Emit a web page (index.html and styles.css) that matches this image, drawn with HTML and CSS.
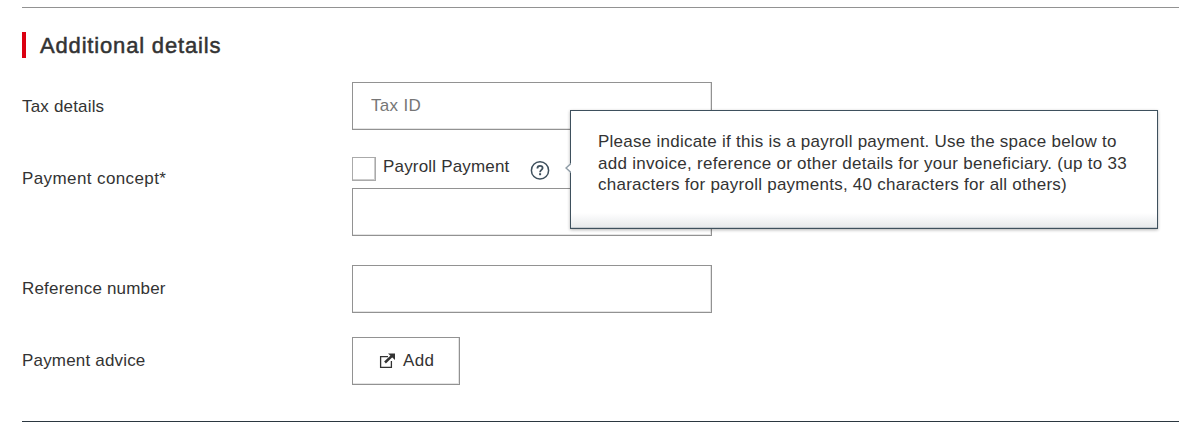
FILE: index.html
```html
<!DOCTYPE html>
<html lang="en">
<head>
	<meta charset="UTF-8">
	<title>Additional details</title>
	<link rel="stylesheet" href="styles.css">
</head>
<body>
	<form class="details">
		<h2 class="title">Additional details</h2>
		<div class="row">
			<label class="label taxLabel" for="taxId">Tax details</label>
			<input class="field" id="taxId" type="text" placeholder="Tax ID">
		</div>
		<div class="row concept">
			<label class="label conceptLabel" for="concept">Payment concept*</label>
			<div class="control">
				<div class="payroll">
					<input class="checkbox" id="payroll" type="checkbox">
					<label class="payrollLabel" for="payroll">Payroll Payment</label>
					<div class="help">
						<svg class="helpIcon" width="20" height="20" viewBox="0 0 20 20" fill="none" stroke="#3e505d">
							<circle cx="10" cy="10.4" r="8.6" stroke-width="1.5"/>
							<path d="M7.4 8.4C7.4 6.6 8.5 5.9 10 5.9C11.6 5.9 12.6 6.7 12.6 8.1C12.6 9.9 10.1 10 10.1 12.2" stroke-width="1.8"/>
							<path d="M10.1 13.2V15.2" stroke-width="2"/>
						</svg>
						<div class="tooltip">
							<svg class="arrow" width="6" height="12" viewBox="0 0 6 12">
								<path d="M6 1.5L1 6L6 10.5" fill="#fff" stroke="#8f9ca6" stroke-width="1.5"/>
							</svg>
							<p class="tooltipText">
								<span class="line">Please indicate if this is a payroll payment. Use the space below to</span>
								<span class="line wide">add invoice, reference or other details for your beneficiary. (up to 33</span>
								<span class="line">characters for payroll payments, 40 characters for all others)</span>
							</p>
						</div>
					</div>
				</div>
				<input class="field" id="concept" type="text">
			</div>
		</div>
		<div class="row">
			<label class="label" for="reference">Reference number</label>
			<input class="field" id="reference" type="text">
		</div>
		<div class="row">
			<span class="label">Payment advice</span>
			<button class="addButton" type="button">
				<svg width="16" height="16" viewBox="0 0 16 16">
					<path d="M9 3.6H1.6V14.4H12.4V8" fill="none" stroke="#333" stroke-width="1.3"/>
					<path d="M6 9.5L13 2.8" fill="none" stroke="#333" stroke-width="2.5"/>
					<path d="M9 0.5H16V7Z" fill="#333"/>
				</svg>
				<span>Add</span>
			</button>
		</div>
	</form>
</body>
</html>
```

FILE: styles.css
```css
* {
	box-sizing: border-box;
	margin: 0;
	padding: 0;
}

body {
	background-color: #fff;
	color: #333;
	font-family: "Liberation Sans", Arial, sans-serif;
	font-size: 17px;
	letter-spacing: 0.18px;
	overflow: hidden;
}

.details {
	margin: 7px 0 0 22px;
	padding-top: 24px;
	height: 415px;
	border-top: 1px solid #929292;
	border-bottom: 1px solid #2b3740;
	box-shadow: 0 1px 0 #c3c8cc;
}

.title {
	height: 26px;
	margin-bottom: 24px;
	padding-left: 14px;
	border-left: 4px solid #db0011;
	font-size: 22px;
	font-weight: 500;
	letter-spacing: 0.83px;
	line-height: 28px;
	-webkit-text-stroke: 0.5px #333;
}

.row {
	display: grid;
	grid-template-columns: 330px 360px;
	margin-bottom: 24px;
}

.label {
	height: 48px;
	line-height: 48px;
	white-space: nowrap;
}

.taxLabel {
	line-height: 50px;
}

.conceptLabel {
	line-height: 50px;
	letter-spacing: 0.4px;
}

.field {
	width: 360px;
	height: 48px;
	padding: 0 18px;
	border: 1px solid #929292;
	box-shadow: inset -1px -1px 0 #e4e4e4;
	background-color: #fff;
	font: inherit;
	letter-spacing: 0.3px;
}

.field::placeholder {
	color: #767676;
}

.concept {
	margin-bottom: 29px;
}

.control {
	padding-top: 3px;
}

.payroll {
	display: flex;
	height: 31px;
}

.checkbox {
	appearance: none;
	width: 24px;
	height: 24px;
	border: 1px solid #aaa;
	box-shadow: inset -1px -1px 0 #ccc;
}

.payrollLabel {
	width: 147px;
	padding-left: 7px;
	line-height: 20px;
	white-space: nowrap;
}

.help {
	position: relative;
	width: 20px;
	height: 20px;
	margin: 3px 0 0 7px;
}

.helpIcon {
	display: block;
}

.tooltip {
	position: absolute;
	top: -50px;
	left: 40px;
	z-index: 10;
	width: 588px;
	height: 119px;
	padding: 20px 27px;
	border: 1px solid #3e505d;
	background: linear-gradient(#fff 102px, #e6e8ea);
	box-shadow: 0 1px 3px rgba(0, 0, 0, 0.3), inset 0 -1px 0 #c6cbcf;
}

.arrow {
	position: absolute;
	top: 51px;
	left: -6px;
}

.tooltipText {
	line-height: 21.5px;
}

.line {
	display: block;
	letter-spacing: 0.25px;
	white-space: nowrap;
}

.wide {
	letter-spacing: 0.28px;
}

.addButton {
	display: flex;
	align-items: center;
	gap: 8px;
	width: 108px;
	height: 48px;
	padding-left: 26px;
	border: 1px solid #929292;
	box-shadow: inset -1px -1px 0 #e4e4e4;
	background-color: #fff;
	color: #333;
	font: inherit;
	letter-spacing: 0.4px;
}
```
